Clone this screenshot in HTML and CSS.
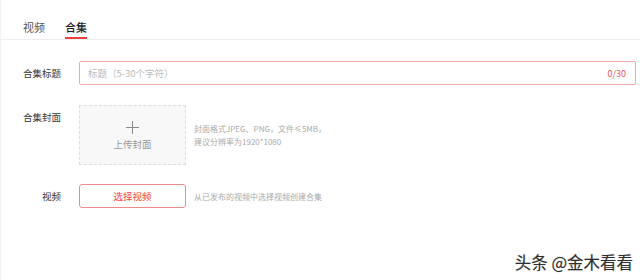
FILE: index.html
```html
<!DOCTYPE html>
<html lang="zh-CN">
  <head>
    <meta charset="UTF-8" />
    <title>合集</title>
    <link rel="stylesheet" href="styles.css">
  </head>
  <body>
    <div class="page">
      <div class="tabs">
        <div class="tab">视频</div>
        <div class="tab active">合集</div>
      </div>

      <div class="form">
        <div class="row">
          <div class="label">合集标题</div>
          <div class="input">
            <span class="placeholder">标题（5-30个字符）</span>
            <span class="count">0/30</span>
          </div>
        </div>

        <div class="row row-cover">
          <div class="label">合集封面</div>
          <div class="cover">
            <svg class="plus" width="13" height="13" viewBox="0 0 13 13">
              <path d="M6.5 0 V13 M0 6.5 H13" stroke="#8a8a8a" stroke-width="1" fill="none" />
            </svg>
            <span class="cover-text">上传封面</span>
          </div>
          <div class="hint">
            封面格式JPEG、PNG，文件≤5MB，<br />
            建议分辨率为1920*1080
          </div>
        </div>

        <div class="row row-video">
          <div class="label">视频</div>
          <button class="btn-select">选择视频</button>
          <div class="hint">从已发布的视频中选择视频创建合集</div>
        </div>
      </div>

      <!-- 水印 -->
      <div class="watermark">头条 @金木看看</div>
    </div>
  </body>
</html>
```

FILE: styles.css
```css
body {
  margin: 0;
  padding: 0;
  background-color: #fff;
  font-family: "Noto Sans CJK SC", "Noto Sans", sans-serif;
  color: #333;
}

.page {
  position: relative;
  height: 280px;
  border-left: 1px solid #f2f2f2;
  box-sizing: border-box;
}

/* Pestañas */
.tabs {
  display: flex;
  gap: 20px;
  padding-left: 22px;
  height: 39px;
  border-bottom: 1px solid #eeeeee;
}

.tab {
  font-size: 11px;
  line-height: 13px;
  padding-top: 21px;
  color: #555;
  box-sizing: border-box;
  height: 39px;
}

.tab.active {
  color: #222;
  font-weight: 500;
  border-bottom: 2px solid #f04142;
}

/* Formulario */
.form {
  padding-top: 21px;
}

.row {
  display: flex;
  align-items: flex-start;
}

.label {
  width: 60px;
  margin-right: 18px;
  text-align: right;
  font-size: 9.5px;
  line-height: 25px;
  color: #333;
}

.input {
  flex: 1;
  margin-right: 4px;
  height: 24px;
  border: 1px solid #f0a9ab;
  border-radius: 2px;
  box-sizing: border-box;
  display: flex;
  align-items: center;
  justify-content: space-between;
  padding: 0 9px 0 8px;
  font-size: 9.5px;
}

.placeholder {
  color: #bbbbbb;
}

.count {
  color: #e8555a;
  font-size: 9px;
}

.row-cover {
  margin-top: 19px;
}

.cover {
  width: 107px;
  height: 60px;
  border: 1px dashed #dddddd;
  background-color: #f8f8f8;
  box-sizing: border-box;
  display: flex;
  flex-direction: column;
  align-items: center;
  justify-content: center;
  color: #999;
}

.plus {
  display: block;
  margin-top: 2px;
}

.cover-text {
  font-size: 9.5px;
  line-height: 14px;
  margin-top: 3px;
}

.hint {
  margin-left: 8px;
  font-size: 8px;
  line-height: 13px;
  color: #aaaaaa;
  align-self: center;
}

.row-video {
  margin-top: 19px;
}

.btn-select {
  width: 107px;
  height: 24px;
  border: 1px solid #f08a8d;
  border-radius: 3px;
  background-color: #fff;
  color: #f04142;
  font-family: inherit;
  font-size: 9.5px;
  padding: 0;
  cursor: pointer;
}

/* Marca de agua */
.watermark {
  position: absolute;
  right: 7px;
  bottom: 6px;
  font-size: 16.5px;
  color: #2e2e2e;
  text-shadow: 0 0 2px #fff, 0 0 1px #999;
}
```
